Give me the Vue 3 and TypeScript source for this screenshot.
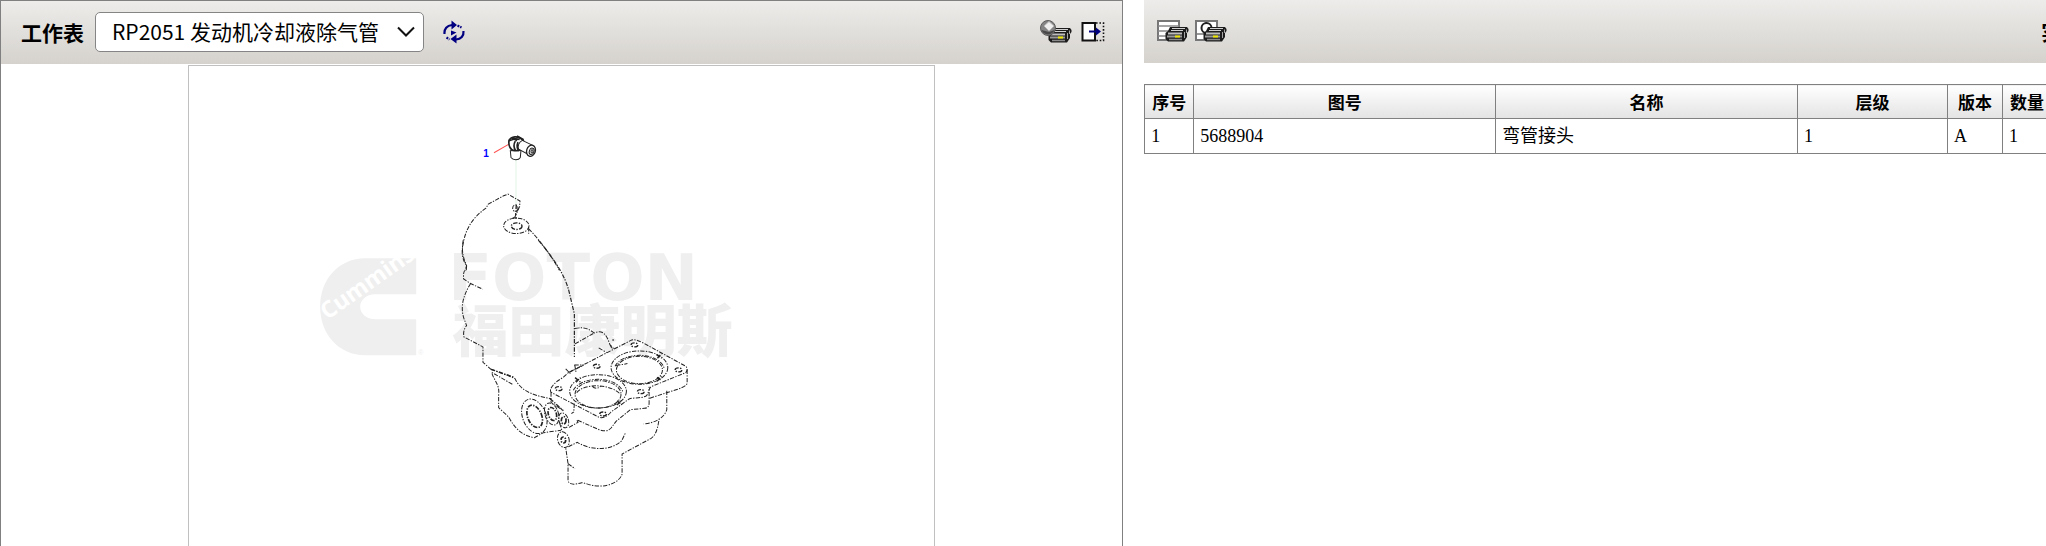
<script setup lang="ts">
import { ref } from 'vue'

interface Part {
  no: string
  code: string
  name: string
  level: string
  version: string
  quantity: string
}

const sheets: string[] = ['RP2051 发动机冷却液除气管']
const sheet = ref<string>(sheets[0])

const columns: { key: keyof Part; label: string }[] = [
  { key: 'no', label: '序号' },
  { key: 'code', label: '图号' },
  { key: 'name', label: '名称' },
  { key: 'level', label: '层级' },
  { key: 'version', label: '版本' },
  { key: 'quantity', label: '数量' },
]

const parts: Part[] = [
  { no: '1', code: '5688904', name: '弯管接头', level: '1', version: 'A', quantity: '1' },
]
</script>

<template>
  <main class="workspace">
    <svg class="symbols" aria-hidden="true">
      <symbol id="printer" viewBox="0 0 32 24">
        <path d="M13 8H30L31.500 10V12L30 14V18L27 22.500H11L8.500 20V14L11 12Z" fill="#1c1c1c" />
        <path d="M15 9.500H28M14 11.500H26" stroke="#d0d0d0" stroke-width="1" />
        <path d="M11 14.500H25" stroke="#bdbdbd" stroke-width="2" />
        <path d="M10 17.500H25" stroke="#9a9a9a" stroke-width="2" />
        <path d="M12 20.500H25" stroke="#8a8a8a" stroke-width="1.500" />
        <path d="M27.500 13V19M29.500 10.500V14" stroke="#a5a5a5" stroke-width="1" />
        <path d="M18 16.500H23V18.500H18Z" fill="#f0e800" />
      </symbol>
    </svg>

    <section class="panel drawing-panel">
      <header class="toolbar drawing-toolbar">
        <label class="title" for="sheet">工作表</label>
        <div class="picker">
          <select id="sheet" v-model="sheet">
            <option v-for="s in sheets" :key="s" :value="s">{{ s }}</option>
          </select>
          <svg class="chevron" viewBox="0 0 18 12" aria-hidden="true">
            <path d="M1 1.500L9 9.500L17 1.500" fill="none" stroke="#111" stroke-width="2" />
          </svg>
        </div>
        <button class="tool refresh" type="button" aria-label="refresh">
          <svg width="24" height="24" viewBox="0 0 24 24">
            <g fill="none" stroke="#000080" stroke-width="2.200">
              <path d="M1.500 14C1 9 4 5.500 9 5" />
              <path d="M20.500 11C21 16 18 19 13 19.500" />
              <path d="M3.500 17.500L6.500 19.500" stroke-dasharray="2 1" />
              <path d="M14.500 5.500L18.500 7.500" stroke-dasharray="2 1" />
            </g>
            <path d="M8.500 0.500L14 5L8.500 9.500Z M13.500 14.500L7.500 19L13.500 23.500Z M8 10.500L13.500 12.500L8 15.500Z" fill="#000080" />
          </svg>
        </button>
        <span class="spacer"></span>
        <button class="tool" type="button" aria-label="print drawing">
          <svg width="32" height="24" viewBox="0 0 32 24">
            <use href="#printer" width="32" height="24" />
            <circle cx="8" cy="8" r="7.500" fill="#858585" stroke="#5c5c5c" />
            <path d="M1.500 10A7 7 0 0 0 14.500 10L9 12Z" fill="#484848" />
            <path d="M9 1.500L14 6L9 11L4 6Z" fill="#eee" stroke="#b5b5b5" />
          </svg>
        </button>
        <button class="tool" type="button" aria-label="detach drawing">
          <svg width="24" height="22" viewBox="0 0 24 22">
            <rect x="1.500" y="2" width="12.500" height="17.500" fill="#fff" stroke="#111" stroke-width="2" />
            <path d="M15 2H22.500V19.500H15" fill="none" stroke="#111" stroke-width="1.600" stroke-dasharray="1.600 1.800" />
            <path d="M8 10.500H16" stroke="#000080" stroke-width="2" />
            <path d="M15 6.500L20 10.500L15 14.500Z" fill="#000080" />
          </svg>
        </button>
      </header>

      <div class="sheet">
        <svg class="drawing" viewBox="189 66 744 480" role="img" aria-label="1">
          <g class="watermark">
            <path d="M416 258H365C339 258 320 279 320 306.500S339 355 365 355H416V319H375C366 319 360 313 360 306.500S366 294 375 294H416Z" />
            <text class="brand" transform="translate(327 320) rotate(-35)">Cummins</text>
            <text class="mark" x="418" y="355">®</text>
            <text class="foton" x="448" y="300">FOTON</text>
            <text class="foton-cn" x="452" y="351">福田康明斯</text>
          </g>

          <!-- elbow fitting and upper housing -->
          <g class="ink" transform="translate(440 110) scale(0.3333)">
            <path class="leader" d="M161 128L206 102" />
            <path class="axis" d="M227 150V285" />
            <g class="solid">
              <path fill="#fff" d="M210 122L212 142C218 151 235 151 240 142L242 120Z" />
              <path fill="#fff" d="M206 91C212 80 232 74 249 91C253 103 244 123 223 122C209 121 204 105 206 91Z" stroke-width="5" />
              <path fill="#fff" d="M246 91L277 106C264 110 258 122 264 133L235 117C231 107 236 96 246 91Z" />
              <path d="M225 93C219 103 221 114 226 122M233 96C228 108 231 119 237 123M206 92L222 87L230 92M230 78L250 89M215 85L238 88" stroke-width="5" />
              <ellipse fill="#fff" cx="272" cy="122" rx="13" ry="17" transform="rotate(18 272 122)" stroke-width="4" />
              <ellipse cx="274" cy="124" rx="7" ry="10" transform="rotate(18 274 124)" />
              <ellipse cx="275" cy="124" rx="3" ry="5" />
            </g>
            <g class="broken">
              <path d="M78 480L79 467C64 445 64 424 68 404C75 360 93 325 137 294L144 282L190 257L203 252L239 273L238 289L223 322" />
              <ellipse cx="225" cy="294" rx="8" ry="10" />
              <path d="M228 284L226 315M217 323H230" stroke-width="4" />
              <ellipse cx="228" cy="347" rx="38" ry="23" />
              <ellipse cx="229" cy="348" rx="16" ry="10" stroke-width="4" />
              <path d="M265 351V371M265 356C300 392 328 430 357 480" />
            </g>
          </g>

          <!-- lower housing with twin bore flange -->
          <g class="ink" transform="translate(440 240) scale(0.3333)">
            <g class="broken">
              <path d="M75 90C68 95 70 106 70 116L91 130L127 147M69 0C64 26 66 48 79 76L75 90" />
              <path d="M91 130C70 164 59 198 71 235L79 256C69 270 69 279 71 290L128 320V366L152 387" />
              <path d="M294 0C350 66 374 110 385 150L402 221V350" stroke-width="3.500" />
              <path d="M404 265C436 258 446 268 462 278C490 266 500 288 508 312L520 326M404 311L462 278M475 323L499 337M508 312L515 326M518 296V302M402 374H430" />
              <path d="M332 444C340 428 355 420 370 410L384 397L570 301C584 294 597 303 610 309L736 378C741 384 742 390 736 397L632 439C622 447 626 461 616 468C596 475 580 471 566 476L512 515C502 526 490 535 476 531L332 456C329 452 330 448 332 444Z" />
              <path d="M332 456V486L369 511M412 540L476 568C491 573 502 574 512 563L527 543L570 508L612 504C622 503 626 498 626 488V439M740 388V429C738 436 728 440 720 444L627 474" />
              <path d="M376 386L390 400M384 397L430 375M403 374L407 396M402 490L400 515L393 520" />
              <ellipse cx="597" cy="382" rx="85" ry="50" />
              <path d="M524 378A75 44 0 0 1 671 384" />
              <ellipse cx="597" cy="389" rx="69" ry="41" />
              <path d="M527 376L561 370" />
              <ellipse cx="473" cy="453" rx="85" ry="50" />
              <path d="M399 450A76 45 0 0 1 547 454" />
              <ellipse cx="473" cy="462" rx="69" ry="41" />
              <path d="M409 457C430 429 510 429 540 462M456 438C463 446 475 445 480 438" />
              <g stroke-width="4">
                <ellipse cx="582" cy="314" rx="10" ry="6" />
                <ellipse cx="469" cy="378" rx="10" ry="6" />
                <ellipse cx="714" cy="389" rx="10" ry="6" />
                <ellipse cx="355" cy="445" rx="10" ry="6" />
                <ellipse cx="601" cy="454" rx="10" ry="6" />
                <ellipse cx="488" cy="521" rx="10" ry="6" />
                <path d="M648 343L664 354M651 354L663 340M404 412L420 425M407 426L420 412M650 411L663 422M650 423L663 408M530 481L544 493M530 494L543 480" />
              </g>
              <path d="M152 387L216 411L224 415C237 443 263 464 332 475M216 432L154 396C160 420 179 432 175 463V502L205 530C222 562 244 586 282 592L309 577L362 570" />
              <path d="M152 387L222 411M329 475L369 511" stroke-width="4" />
              <ellipse cx="282" cy="528" rx="35" ry="54" transform="rotate(-22 282 528)" />
              <ellipse cx="283" cy="528" rx="21" ry="35" transform="rotate(-22 283 528)" stroke-width="5" />
              <ellipse cx="334" cy="521" rx="20" ry="34" transform="rotate(-18 334 521)" />
              <ellipse cx="336" cy="521" rx="12" ry="20" transform="rotate(-18 336 521)" stroke-width="5" />
              <ellipse cx="370" cy="540" rx="14" ry="23" transform="rotate(-18 370 540)" />
              <ellipse cx="370" cy="540" rx="7" ry="11" stroke-width="5" />
              <ellipse cx="369" cy="598" rx="17" ry="24" transform="rotate(-18 369 598)" />
              <ellipse cx="369" cy="599" rx="7" ry="9" stroke-width="5" />
              <path d="M358 549L366 575M386 561L413 546L409 538M384 619L411 606C450 630 510 633 544 601L555 578" />
              <path d="M679 451V508C671 534 642 548 610 551M655 542C651 567 646 584 632 594L545 641V701C539 722 509 738 475 737C452 737 434 727 424 727C405 733 382 735 383 717V670L376 622M383 670L404 685" />
            </g>
          </g>
          <text class="callout" x="483" y="157">1</text>
        </svg>
      </div>
    </section>

    <section class="panel list-panel">
      <div class="list">
        <header class="toolbar list-toolbar">
          <button class="tool" type="button" aria-label="print list">
            <svg width="32" height="24" viewBox="0 0 32 24">
              <path d="M1 2H22V21H1Z" fill="#fff" stroke="#777" stroke-width="2" />
              <path d="M1 7H22M1 12H22M1 17H15" stroke="#888" stroke-width="1.500" />
              <use href="#printer" width="32" height="24" />
            </svg>
          </button>
          <button class="tool" type="button" aria-label="print drawing and list">
            <svg width="32" height="24" viewBox="0 0 32 24">
              <path d="M1 2H22V21H1Z" fill="#fff" stroke="#777" stroke-width="2" />
              <path d="M1 15H10M11 2V5" stroke="#777" stroke-width="1.500" />
              <circle cx="11.500" cy="9" r="5" fill="#fff" stroke="#222" stroke-width="2" />
              <use href="#printer" width="32" height="24" />
            </svg>
          </button>
          <span class="spacer"></span>
          <h2 class="title">实</h2>
        </header>

        <table class="parts">
          <colgroup>
            <col v-for="c in columns" :key="c.key" :class="'col-' + c.key" />
          </colgroup>
          <thead>
            <tr>
              <th v-for="c in columns" :key="c.key" scope="col">{{ c.label }}</th>
            </tr>
          </thead>
          <tbody>
            <tr v-for="p in parts" :key="p.no">
              <td v-for="c in columns" :key="c.key">{{ p[c.key] }}</td>
            </tr>
          </tbody>
        </table>
      </div>
    </section>
  </main>
</template>

<style>
body {
  background: #fff;
  overflow: hidden;
}
</style>

<style scoped>
.workspace {
  display: flex;
  gap: 21px;
  height: 100vh;
  color: #000;
  font-family: "Noto Sans CJK SC", sans-serif;
}

.symbols {
  position: absolute;
  width: 0;
  height: 0;
}

.panel {
  box-sizing: border-box;
  overflow: hidden;
}

.drawing-panel {
  display: flex;
  flex-direction: column;
  flex: 0 0 54.9%;
  border: 1px solid #808080;
  border-bottom: 0;
}

.list-panel {
  flex: 1;
  min-width: 0;
}

.toolbar {
  display: flex;
  align-items: center;
  flex: none;
  box-sizing: border-box;
  height: 63px;
  background: linear-gradient(#edecea, #d5d2cd);
}

.drawing-toolbar {
  padding: 0 17px 2px 20px;
}

.list-toolbar {
  gap: 6px;
  padding: 0 0 2px 13px;
}

.title {
  flex: none;
  margin: 0;
  font-size: 21px;
  line-height: 30px;
  font-weight: 700;
}

.picker {
  position: relative;
  margin-left: 11px;
}

select {
  appearance: none;
  display: block;
  box-sizing: border-box;
  width: 329px;
  height: 40px;
  padding: 0 40px 2px 16px;
  border: 1px solid #858585;
  border-radius: 5px;
  background: #fff;
  color: #000;
  font-family: "Noto Sans CJK SC", sans-serif;
  font-size: 21px;
}

.chevron {
  position: absolute;
  top: 14px;
  right: 9px;
  width: 18px;
  height: 12px;
  pointer-events: none;
}

.spacer {
  flex: 1;
}

.tool {
  display: block;
  flex: none;
  padding: 0;
  border: 0;
  background: none;
  cursor: pointer;
}

.tool svg {
  display: block;
}

.refresh {
  margin-left: 19px;
}

.drawing-toolbar .tool + .tool {
  margin-left: 9px;
}

.sheet {
  flex: 1;
  align-self: center;
  box-sizing: border-box;
  width: 66.6%;
  margin-top: 1px;
  border: 1px solid #c0c0c0;
  border-bottom: 0;
  overflow: hidden;
}

.drawing {
  display: block;
  width: 100%;
}

.watermark {
  fill: #efefef;
}

.brand {
  fill: #fff;
  font: 700 23px "Open Sans", sans-serif;
}

.mark {
  font: 7px "Liberation Sans", sans-serif;
}

.foton {
  font: 700 64px "DejaVu Sans", sans-serif;
}

.foton-cn {
  font: 900 56px "Noto Sans CJK SC", sans-serif;
}

.ink {
  fill: none;
  stroke: #222;
  stroke-width: 3;
}

.broken {
  stroke-dasharray: 13 4 4 4;
}

.leader {
  stroke: #ff5050;
}

.axis {
  stroke: #e2f3e6;
}

.callout {
  fill: #0000ff;
  font: 700 10px "Liberation Sans", sans-serif;
}

.list {
  width: calc(100% + 16px);
}

.parts {
  width: calc(100% - 10px);
  margin-top: 21px;
  border-collapse: collapse;
  table-layout: fixed;
}

.col-no {
  width: 49px;
}

.col-level {
  width: 150px;
}

.col-version {
  width: 55px;
}

.col-quantity {
  width: 49px;
}

.parts th,
.parts td {
  box-sizing: border-box;
  height: 34px;
  padding: 0 6px;
  border: 1px solid #808080;
  white-space: nowrap;
}

.parts th {
  padding: 0;
  background: linear-gradient(#fff, #e3e3e3);
  font-size: 17px;
  line-height: 24px;
}

.parts td {
  height: 35px;
  font-family: "Liberation Serif", "Noto Sans CJK SC", serif;
  font-size: 18px;
  line-height: 24px;
}
</style>
